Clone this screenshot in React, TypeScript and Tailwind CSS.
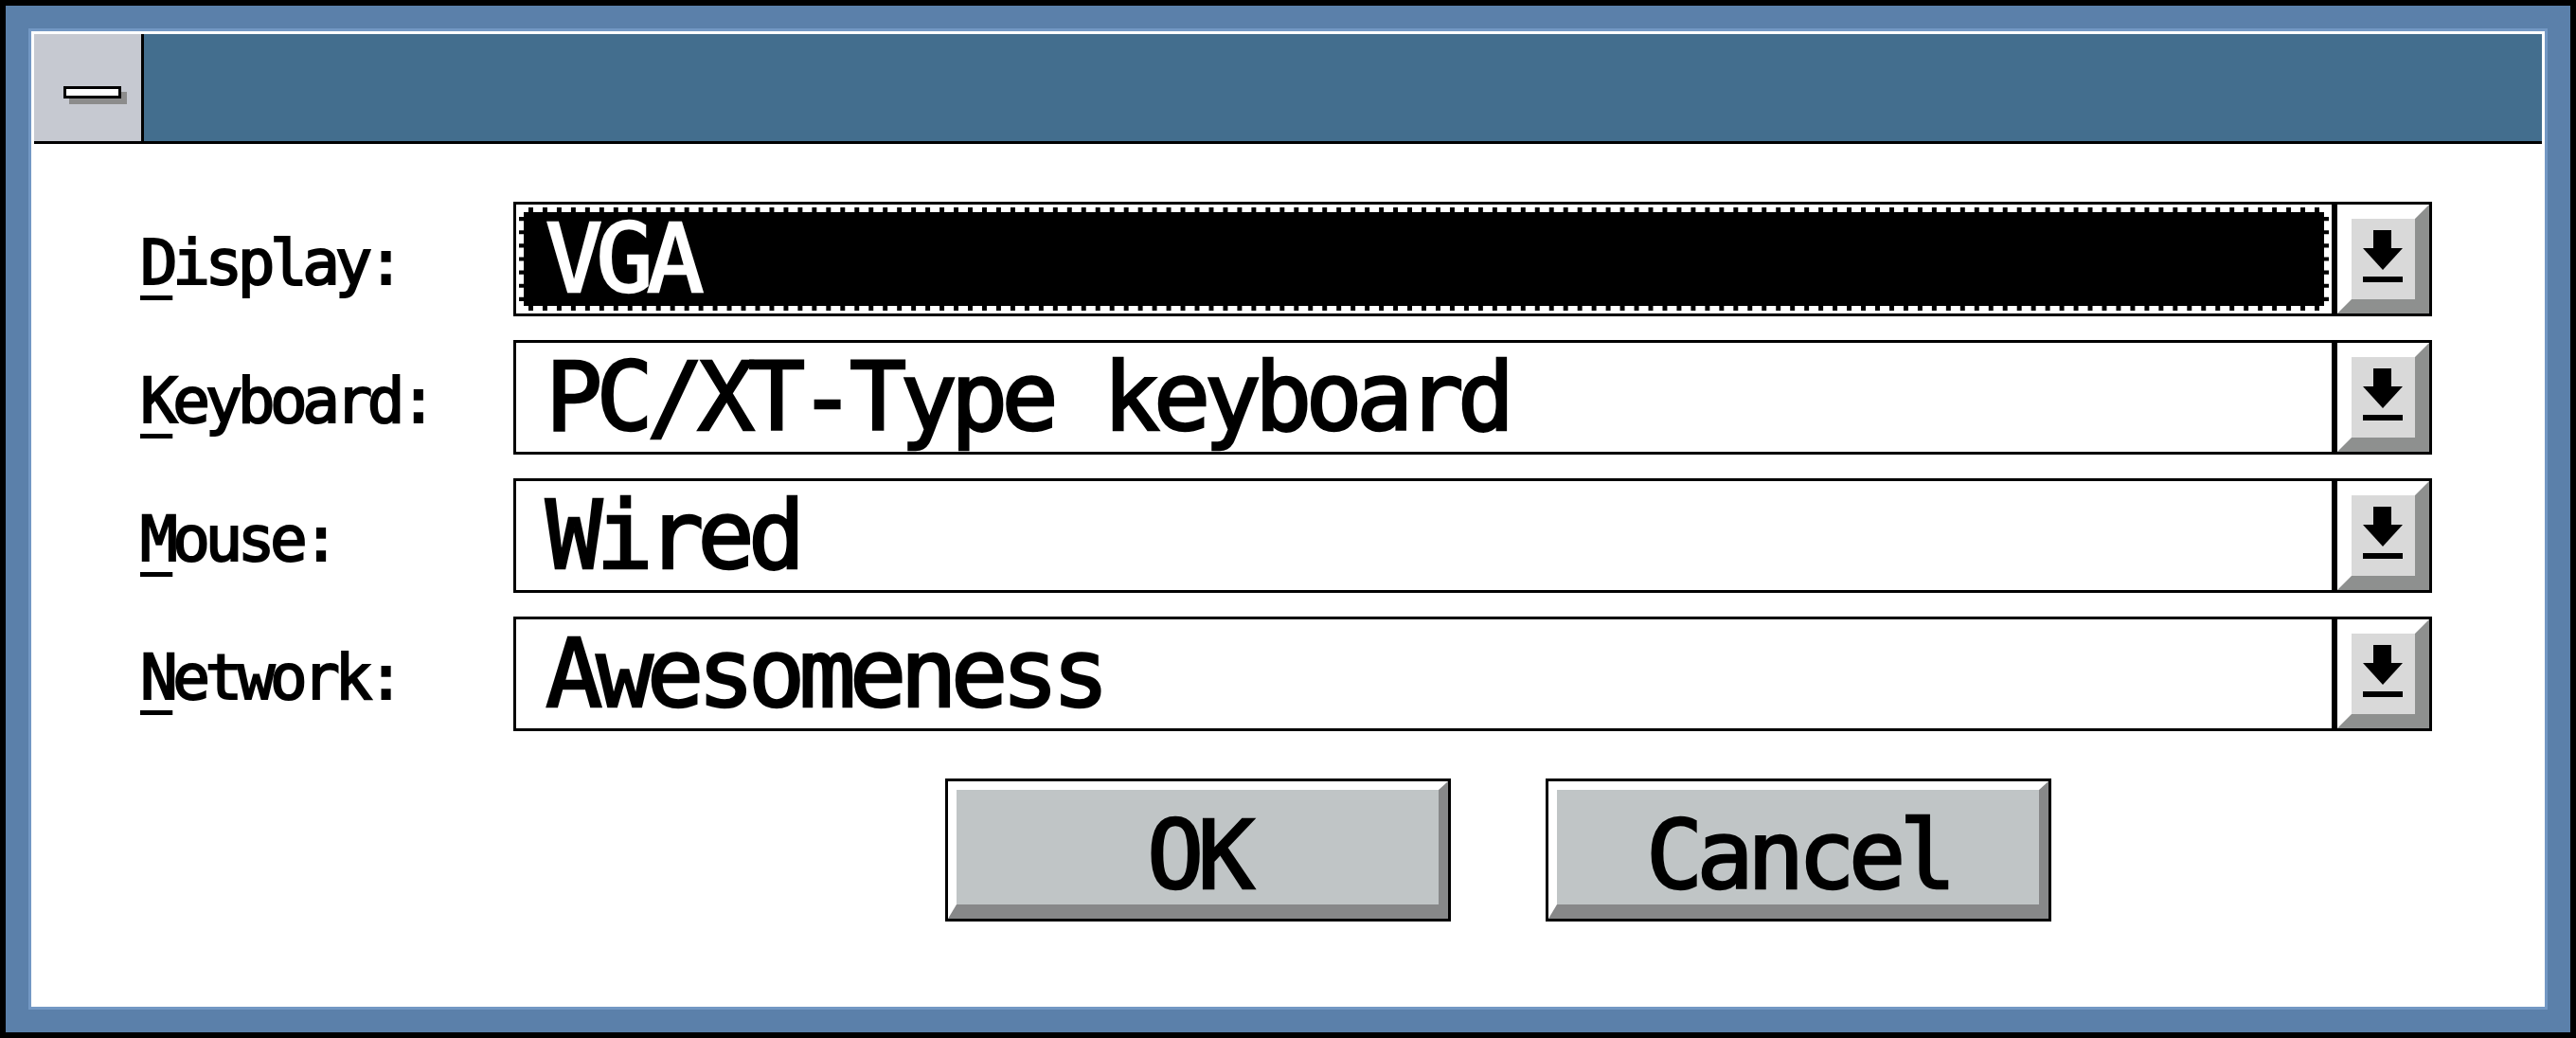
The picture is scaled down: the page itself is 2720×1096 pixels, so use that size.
import React from 'react'

const rows = [
    { key: 'D', rest: 'isplay:', value: 'VGA', focused: true },
    { key: 'K', rest: 'eyboard:', value: 'PC/XT-Type keyboard', focused: false },
    { key: 'M', rest: 'ouse:', value: 'Wired', focused: false },
    { key: 'N', rest: 'etwork:', value: 'Awesomeness', focused: false },
]

const DropArrow = () => (
    <svg width="66" height="85" viewBox="0 0 66 85">
        <rect x="23" y="12" width="19" height="20" fill="#000" />
        <polygon points="12,31 54,31 33,54" fill="#000" />
        <rect x="12" y="61" width="42" height="6" fill="#000" />
    </svg>
)

const Combo = ({ value, focused }: { value: string; focused: boolean }) => {
    return (
        <div className="w-[2026px] h-[121px] flex border-[3px] border-black bg-white">
            {focused ? (
                <div className="flex-1 flex p-[3px]">
                    <div className="flex-1 flex items-center bg-black border-[5px] border-dashed border-white pl-[23px]">
                        <span className="text-white text-[100px] leading-none tracking-[-6.7px] [-webkit-text-stroke:2.5px_white]">{value}</span>
                    </div>
                </div>
            ) : (
                <div className="flex-1 flex items-center pl-[31px]">
                    <span className="text-black text-[100px] leading-none tracking-[-6.7px] [-webkit-text-stroke:2.5px_black]">{value}</span>
                </div>
            )}
            <div className="w-[103px] border-l-[6px] border-black">
                <div className="h-full border-[15px] border-t-white border-l-white border-b-[#8e908f] border-r-[#8e908f] bg-[#d9d9d9] flex items-start">
                    <DropArrow />
                </div>
            </div>
        </div>
    )
}

const Button = ({ label }: { label: string }) => (
    <div className="w-[534px] h-[151px] border-[3px] border-black">
        <div className="h-full border-t-[9px] border-l-[9px] border-r-[10px] border-b-[15px] border-t-white border-l-white border-r-[#878889] border-b-[#878889] bg-[#c0c5c6] flex items-center justify-center">
            <span className="text-[100px] leading-none tracking-[-6.7px] mt-[18px] [-webkit-text-stroke:2.5px_black]">{label}</span>
        </div>
    </div>
)

const App = () => {
    return (
        <div className="w-[2720px] h-[1096px] bg-black p-[6px] font-['DejaVu_Sans_Mono',monospace] text-black">
            <div className="w-full h-full bg-[#5b80aa] p-[24px]">
                <div className="w-full h-full border-[3px] border-[#7398c4]">
                    <div className="w-full h-full bg-white p-[3px] flex flex-col">
                        {/* title bar */}
                        <div className="h-[116px] flex border-b-[3px] border-black bg-[#436e8e]">
                            <div className="w-[116px] h-full bg-[#c6c9d1] border-r-[3px] border-black pl-[31px] pt-[55px]">
                                <div className="w-[61px] h-[13px] bg-white border-[3px] border-black shadow-[6px_6px_0_#8c8c8c]" />
                            </div>
                            <div className="flex-1" />
                        </div>

                        <div className="flex flex-col gap-[25px] pt-[61px] pl-[112px]">
                            {rows.map((r) => (
                                <div key={r.key} className="flex items-center">
                                    <div className="w-[394px] text-[66px] leading-none tracking-[-5.5px] mt-[8px] [-webkit-text-stroke:2px_black]">
                                        <span className="underline decoration-[5px] underline-offset-[12px]">{r.key}</span>
                                        {r.rest}
                                    </div>
                                    <Combo value={r.value} focused={r.focused} />
                                </div>
                            ))}
                        </div>

                        <div className="flex gap-[100px] pl-[962px] pt-[50px]">
                            <Button label="OK" />
                            <Button label="Cancel" />
                        </div>
                    </div>
                </div>
            </div>
        </div>
    )
}

export default App
